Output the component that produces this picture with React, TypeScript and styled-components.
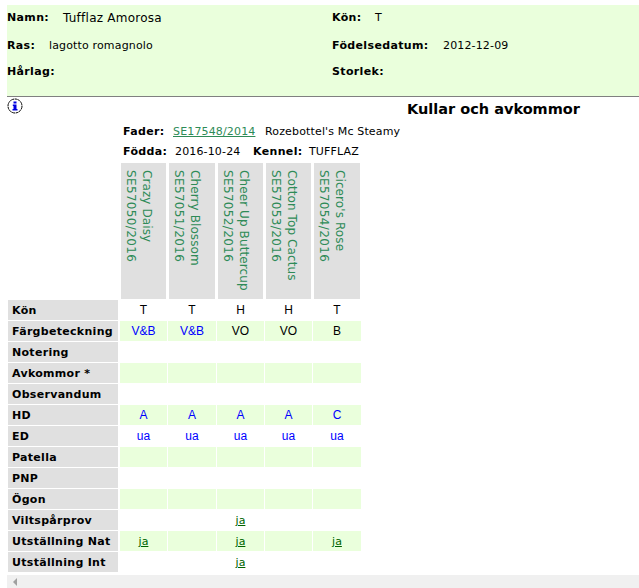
import { Fragment } from 'react';
import { createGlobalStyle, styled } from 'styled-components';

const GlobalStyle = createGlobalStyle`
  html, body {
    margin: 0;
    padding: 0;
    background: #fff;
    overflow: hidden;
  }
  body {
    font-family: "DejaVu Sans", Verdana, sans-serif;
    font-size: 11px;
    letter-spacing: 0.15px;
    color: #000;
  }
  b {
    letter-spacing: 0.35px;
  }
`;

const Page = styled.div`
  width: 639px;
  height: 588px;
  display: flex;
  flex-direction: column;
  padding-left: 7px;
  box-sizing: border-box;
`;

const DogInfo = styled.div`
  margin-top: 5px;
  height: 91px;
  flex: none;
  background: #eaffdc;
  border-bottom: 1px solid #808080;
  display: grid;
  grid-template-columns: 325px 1fr;
  grid-template-rows: 25px 30px 22px;
`;

const InfoItem = styled.div`
  display: flex;
  align-items: center;
  white-space: nowrap;
`;

const InfoLabel = styled.b<{ $width: number }>`
  width: ${(p) => p.$width}px;
  flex: none;
`;

const NameValue = styled.span`
  font-size: 12px;
  letter-spacing: 0.25px;
`;

const TitleRow = styled.div`
  height: 24px;
  flex: none;
  display: flex;
  align-items: flex-start;
  padding-top: 1px;
  box-sizing: border-box;
`;

const InfoIcon = styled.svg`
  width: 16px;
  height: 16px;
  flex: none;
`;

const Title = styled.h2`
  margin: 2px 0 0 384px;
  font-size: 14.5px;
  line-height: 18px;
  letter-spacing: 0;
  font-weight: bold;
  white-space: nowrap;
`;

const ParentRow = styled.div`
  height: 20px;
  padding-left: 116px;
  display: flex;
  align-items: center;
  white-space: nowrap;
`;

const ParentLabel = styled.b<{ $width: number }>`
  width: ${(p) => p.$width}px;
  flex: none;
`;

const RegLink = styled.a`
  color: #2e8b57;
  text-decoration: underline;
  width: 92px;
  flex: none;
`;

const BirthDate = styled.span`
  width: 78px;
  flex: none;
`;

const Grid = styled.div`
  margin: 2px 0 0 1px;
  display: grid;
  grid-template-columns: 111px 47px 48px 47px 47px 48px;
  grid-template-rows: 136px;
  column-gap: 1px;
  row-gap: 1px;
  grid-auto-rows: 20px;
  flex: none;
  width: 353px;
`;

const PupHead = styled.div`
  margin: 0 1px;
  background: #e0e0e0;
  color: #2e8b57;
  writing-mode: vertical-rl;
  padding: 7px 10px 0 0;
  box-sizing: border-box;
  text-align: left;
  font-size: 12px;
  line-height: 16px;
  white-space: pre;
  display: flex;
  justify-content: center;
  flex-direction: column;
`;

const PupLine = styled.span<{ $spacing: number }>`
  display: block;
  letter-spacing: ${(p) => p.$spacing}px;
`;

const RowLabel = styled.div`
  background: #e0e0e0;
  margin-right: 1px;
  padding-left: 4px;
  font-weight: bold;
  letter-spacing: 0.3px;
  line-height: 21px;
  white-space: nowrap;
`;

const Cell = styled.div<{ $striped: boolean; $marked?: boolean }>`
  background: ${(p) => (p.$striped ? '#eaffdc' : '#fff')};
  color: ${(p) => (p.$marked ? '#0000ff' : '#000')};
  font-family: "Liberation Sans", Arial, sans-serif;
  font-size: 12px;
  letter-spacing: 0;
  line-height: 21px;
  text-align: center;
  overflow: hidden;
`;

const ResultLink = styled.a`
  color: #006400;
  text-decoration: underline;
  font-family: "DejaVu Sans", Verdana, sans-serif;
  font-size: 11px;
`;

const Scrollbar = styled.div`
  margin-top: auto;
  height: 13px;
  flex: none;
  background: #f0f0f0;
  display: flex;
  align-items: center;
  padding-left: 6px;
`;

const ScrollArrow = styled.div`
  width: 0;
  height: 0;
  border-top: 4px solid transparent;
  border-bottom: 4px solid transparent;
  border-right: 4px solid #a0a0a0;
`;

type RowData = { label: string; values: string[]; marked?: boolean; links?: boolean };

const pups = [
  { name: 'Crazy Daisy', reg: 'SE57050/2016' },
  { name: 'Cherry Blossom', reg: 'SE57051/2016' },
  { name: 'Cheer Up Buttercup', reg: 'SE57052/2016' },
  { name: 'Cotton Top Cactus', reg: 'SE57053/2016' },
  { name: "Cicero's Rose", reg: 'SE57054/2016' },
];

const empty = ['', '', '', '', ''];

const rows: RowData[] = [
  { label: 'Kön', values: ['T', 'T', 'H', 'H', 'T'] },
  { label: 'Färgbeteckning', values: ['V&B', 'V&B', 'VO', 'VO', 'B'] },
  { label: 'Notering', values: empty },
  { label: 'Avkommor *', values: empty },
  { label: 'Observandum', values: empty },
  { label: 'HD', values: ['A', 'A', 'A', 'A', 'C'], marked: true },
  { label: 'ED', values: ['ua', 'ua', 'ua', 'ua', 'ua'], marked: true },
  { label: 'Patella', values: empty },
  { label: 'PNP', values: empty },
  { label: 'Ögon', values: empty },
  { label: 'Viltspårprov', values: ['', '', 'ja', '', ''], links: true },
  { label: 'Utställning Nat', values: ['ja', '', 'ja', '', 'ja'], links: true },
  { label: 'Utställning Int', values: ['', '', 'ja', '', ''], links: true },
];

export default function App() {
  return (
    <>
      <GlobalStyle />
      <Page>
        <DogInfo>
          <InfoItem>
            <InfoLabel $width={56}>Namn:</InfoLabel>
            <NameValue>Tufflaz Amorosa</NameValue>
          </InfoItem>
          <InfoItem>
            <InfoLabel $width={43}>Kön:</InfoLabel>
            <span>T</span>
          </InfoItem>
          <InfoItem>
            <InfoLabel $width={42}>Ras:</InfoLabel>
            <span>lagotto romagnolo</span>
          </InfoItem>
          <InfoItem>
            <InfoLabel $width={111}>Födelsedatum:</InfoLabel>
            <span>2012-12-09</span>
          </InfoItem>
          <InfoItem>
            <InfoLabel $width={56}>Hårlag:</InfoLabel>
          </InfoItem>
          <InfoItem>
            <InfoLabel $width={56}>Storlek:</InfoLabel>
          </InfoItem>
        </DogInfo>

        <TitleRow>
          <InfoIcon viewBox="0 0 16 16">
            <circle cx="8" cy="8" r="7" fill="#fff" stroke="#000" strokeWidth="1" strokeDasharray="3 0.6" />
            <rect x="6.5" y="3.5" width="3" height="2" fill="#0000e0" />
            <path d="M5.8 6.5h3.7V11h1v1.5H5.5V11h1V8H5.8z" fill="#0000e0" />
          </InfoIcon>
          <Title>Kullar och avkommor</Title>
        </TitleRow>

        <ParentRow>
          <ParentLabel $width={50}>Fader:</ParentLabel>
          <RegLink href="#">SE17548/2014</RegLink>
          <span>Rozebottel's Mc Steamy</span>
        </ParentRow>
        <ParentRow>
          <ParentLabel $width={52}>Födda:</ParentLabel>
          <BirthDate>2016-10-24</BirthDate>
          <ParentLabel $width={56}>Kennel:</ParentLabel>
          <span>TUFFLAZ</span>
        </ParentRow>

        <Grid>
          <div />
          {pups.map((pup) => (
            <PupHead key={pup.reg}>
              <PupLine $spacing={0.1}>{pup.name}</PupLine>
              <PupLine $spacing={0.35}>{pup.reg}</PupLine>
            </PupHead>
          ))}
          {rows.map((row, i) => (
            <Fragment key={row.label}>
              <RowLabel>{row.label}</RowLabel>
              {row.values.map((value, c) => (
                <Cell key={c} $striped={i % 2 === 1} $marked={row.marked || value.includes('&')}>
                  {row.links && value ? <ResultLink href="#">{value}</ResultLink> : value}
                </Cell>
              ))}
            </Fragment>
          ))}
        </Grid>

        <Scrollbar>
          <ScrollArrow />
        </Scrollbar>
      </Page>
    </>
  );
}
